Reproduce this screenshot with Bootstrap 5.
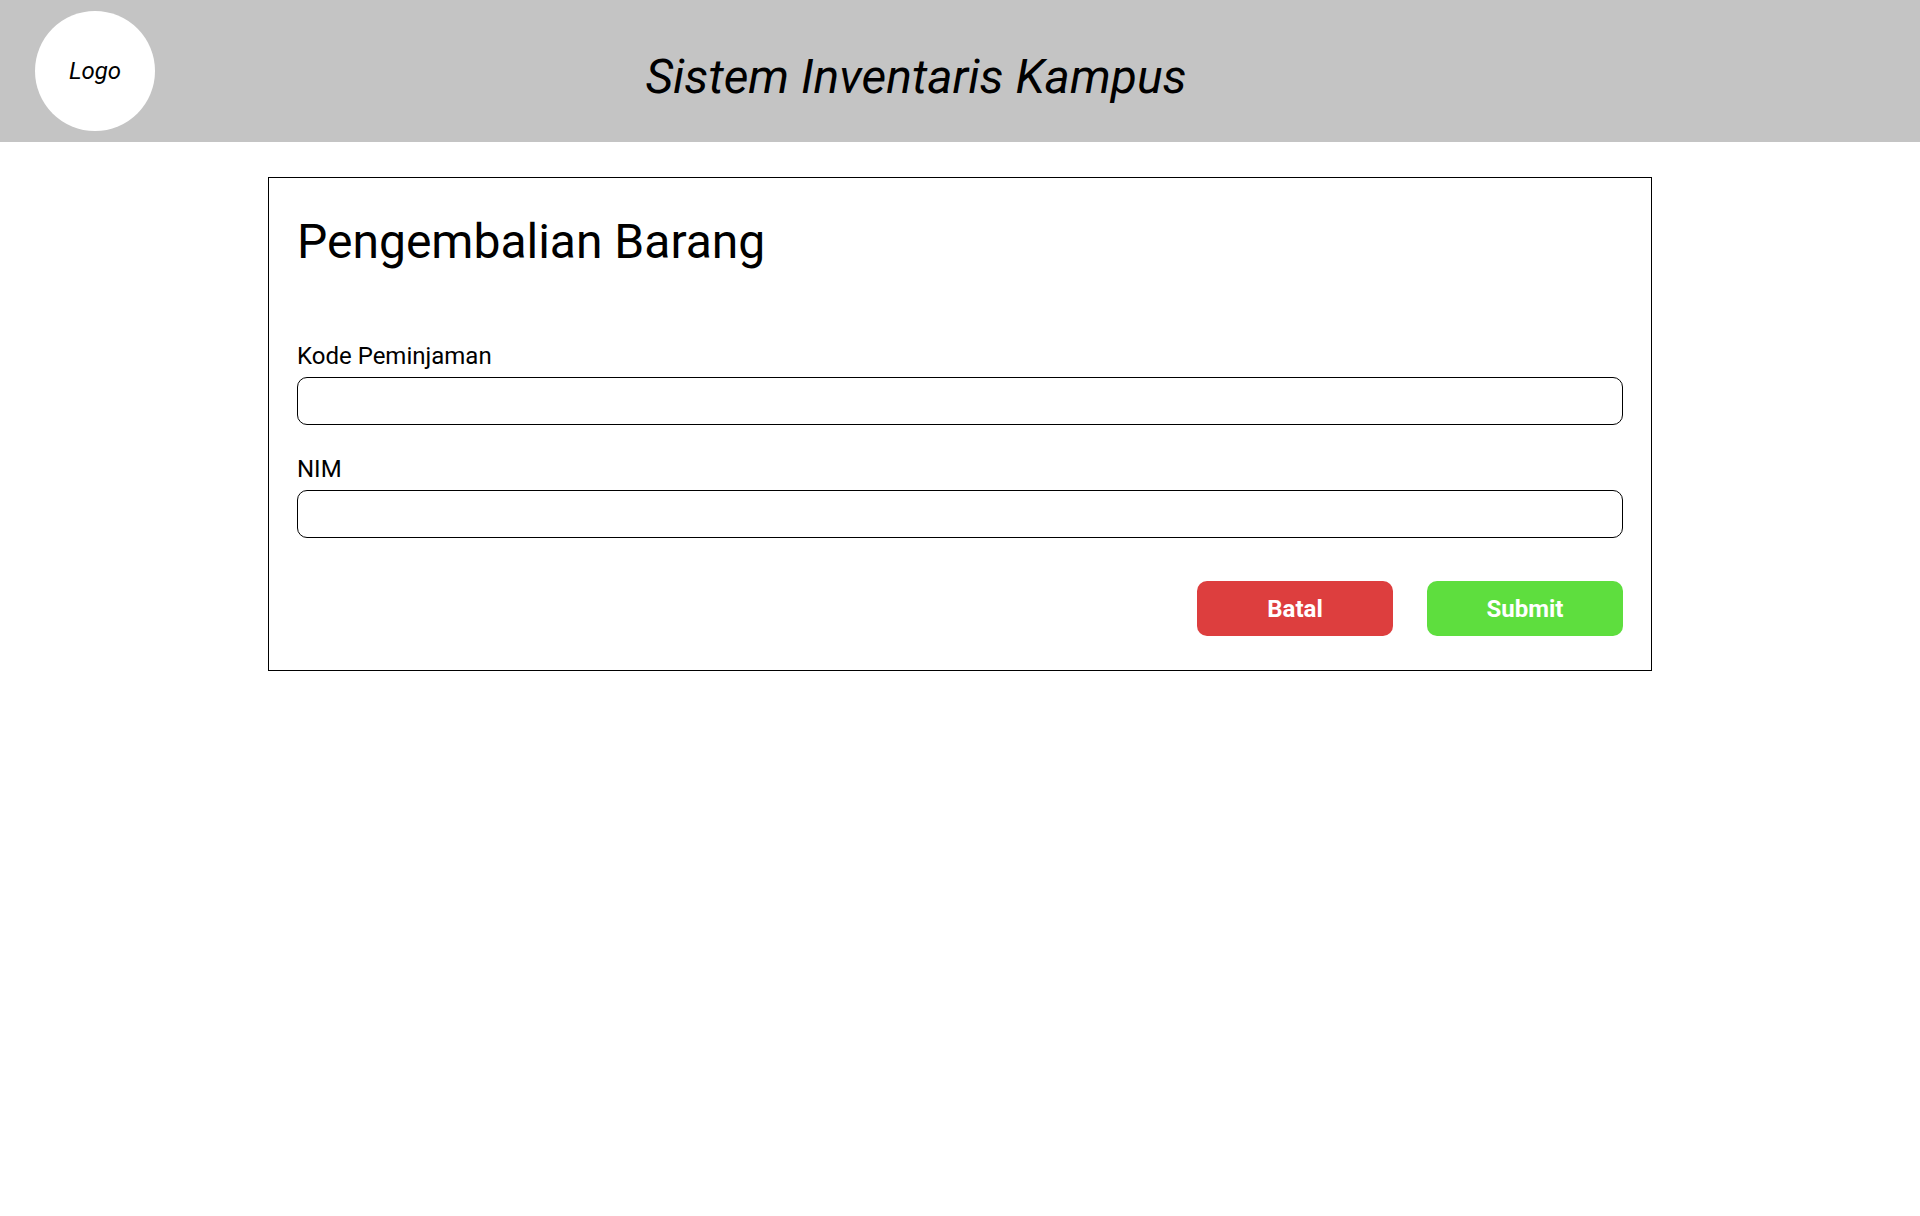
<!DOCTYPE html>
<html lang="id">
<head>
<meta charset="utf-8">
<meta name="viewport" content="width=device-width, initial-scale=1">
<title>Sistem Inventaris Kampus</title>
<link href="https://cdn.jsdelivr.net/npm/bootstrap@5.3.0/dist/css/bootstrap.min.css" rel="stylesheet">
<style>
  body { font-family: Roboto, "Liberation Sans", sans-serif; font-size: 24px; line-height: 28px; color: #000; background: #fff; }
  .site-header { background: #c4c4c4; padding: 11px 35px; }
  .site-logo { width: 120px; height: 120px; }
  .site-title, .page-title { font-size: 48px; line-height: 56px; font-weight: 400; color: #000; }
  .site-title { padding: 12px 208px 0 0; }
  .page-wrap { max-width: 1384px; margin-top: 35px; }
  .return-card { border: 1px solid #000; border-radius: 0; color: #000; }
  .return-card .card-body { padding: 36px 28px 34px; }
  .page-title { margin-bottom: 72px; }
  .field-group { margin-bottom: 30px; }
  .field-group .form-label { margin-bottom: 7px; display: block; }
  .field-group .form-control { height: 48px; border: 1px solid #000; border-radius: 10px; font-size: 24px; line-height: 28px; color: #000; }
  .form-actions { gap: 34px; padding-top: 13px; }
  .form-actions .btn { width: 196px; height: 55px; border: 0; border-radius: 10px; font-size: 24px; line-height: 28px; font-weight: 700; color: #fff; }
  .btn-cancel, .btn-cancel:hover { background: #dd3e3e; }
  .btn-send, .btn-send:hover { background: #5ede3e; }
</style>
</head>
<body>
<header class="site-header d-flex align-items-center">
  <a href="#" class="site-logo rounded-circle bg-white text-black text-decoration-none fst-italic d-flex align-items-center justify-content-center flex-shrink-0">Logo</a>
  <div class="site-title flex-fill text-center fst-italic">Sistem Inventaris Kampus</div>
</header>
<main class="page-wrap mx-auto">
  <div class="card return-card">
    <form class="card-body">
      <h1 class="page-title">Pengembalian Barang</h1>
      <div class="field-group">
        <label class="form-label" for="kode">Kode Peminjaman</label>
        <input class="form-control" type="text" id="kode" name="kode">
      </div>
      <div class="field-group">
        <label class="form-label" for="nim">NIM</label>
        <input class="form-control" type="text" id="nim" name="nim">
      </div>
      <div class="form-actions d-flex flex-wrap justify-content-end">
        <button type="button" class="btn btn-cancel">Batal</button>
        <button type="submit" class="btn btn-send">Submit</button>
      </div>
    </form>
  </div>
</main>
<script src="https://cdn.jsdelivr.net/npm/bootstrap@5.3.0/dist/js/bootstrap.bundle.min.js"></script>
</body>
</html>
